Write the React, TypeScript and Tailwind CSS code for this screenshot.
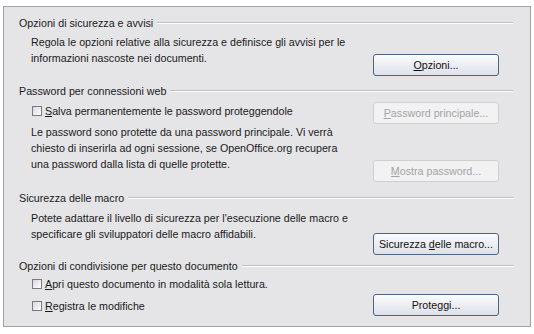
import type { ReactNode } from 'react';

const Header = ({ children, className }: { children: ReactNode; className: string }) => (
  <div className={`flex items-center h-[14px] pl-[15px] pr-[17px] ${className}`}>
    <span className="whitespace-nowrap pr-[4px]">{children}</span>
    <div className="flex-1 h-[2px] border-t border-[#c0c0c4] border-b border-b-white" />
  </div>
);

const Button = ({ children, disabled, className }: { children: ReactNode; disabled?: boolean; className: string }) => (
  <div
    className={`w-[126px] h-[22px] flex items-center justify-center rounded-[3px] border ${
      disabled
        ? 'border-[#cfcfd2] bg-[#f2f2f3] text-[#a3a3a6]'
        : 'border-[#4d6582] bg-gradient-to-b from-[#fbfbfc] to-[#dde1e8] text-[#111]'
    } ${className}`}
  >
    {children}
  </div>
);

const Check = ({ children, className }: { children: ReactNode; className: string }) => (
  <div className={`flex items-center h-[14px] gap-[3px] ${className}`}>
    <div className="w-[10px] h-[10px] border border-[#7a7a80] bg-gradient-to-br from-[#d8d8dd] to-white" />
    <span className="whitespace-nowrap">{children}</span>
  </div>
);

export default function App() {
  return (
    <div
      className="w-[534px] h-[334px] overflow-hidden bg-white pt-[6px] px-[3px] text-[10.7px] text-[#1a1a1a]"
      style={{ fontFamily: '"Liberation Sans", Arial, sans-serif' }}
    >
      <div className="h-[321px] border border-[#a2a2a6] bg-[#e5e5e8] flex flex-col">
        <Header className="mt-[9px]">Opzioni di sicurezza e avvisi</Header>
        <div className="h-[54px] flex justify-between pl-[27px] pr-[31px]">
          <p className="mt-[4px] leading-[16px]">
            Regola le opzioni relative alla sicurezza e definisce gli avvisi per le
            <br />
            informazioni nascoste nei documenti.
          </p>
          <Button className="mt-[24px]">
            <span><u>O</u>pzioni...</span>
          </Button>
        </div>

        <Header className="">Password per connessioni web</Header>
        <div className="h-[26px] flex justify-between pl-[28px] pr-[31px]">
          <Check className="mt-[6px]">
            <u>S</u>alva permanentemente le password proteggendole
          </Check>
          <Button disabled className="mt-[4px]">
            <span><u>P</u>assword principale...</span>
          </Button>
        </div>
        <div className="h-[67px] flex justify-between pl-[27px] pr-[31px]">
          <p className="leading-[16px]">
            Le password sono protette da una password principale. Vi verrà
            <br />
            chiesto di inserirla ad ogni sessione, se OpenOffice.org recupera
            <br />
            una password dalla lista di quelle protette.
          </p>
          <Button disabled className="mt-[36px]">
            <span><u>M</u>ostra password...</span>
          </Button>
        </div>

        <Header className="">Sicurezza delle macro</Header>
        <div className="h-[54px] flex justify-between pl-[27px] pr-[31px]">
          <p className="mt-[5px] leading-[16px]">
            Potete adattare il livello di sicurezza per l'esecuzione delle macro e
            <br />
            specificare gli sviluppatori delle macro affidabili.
          </p>
          <Button className="mt-[28px]">
            <span>Sicurezza <u>d</u>elle macro...</span>
          </Button>
        </div>

        <Header className="">Opzioni di condivisione per questo documento</Header>
        <div className="flex-1 flex justify-between pl-[28px] pr-[31px]">
          <div className="flex flex-col">
            <Check className="mt-[4px]">
              <u>A</u>pri questo documento in modalità sola lettura.
            </Check>
            <Check className="mt-[8px]">
              <u>R</u>egistra le modifiche
            </Check>
          </div>
          <Button className="mt-[21px]">
            <span>Prote<u>g</u>gi...</span>
          </Button>
        </div>
      </div>
      <div className="mt-[4px] ml-[3px] text-[15px] leading-[18px] italic whitespace-nowrap text-[#222]">
        Figura 10: Opzioni di sicurezza per i documenti di OpenOffice.org
      </div>
    </div>
  );
}
